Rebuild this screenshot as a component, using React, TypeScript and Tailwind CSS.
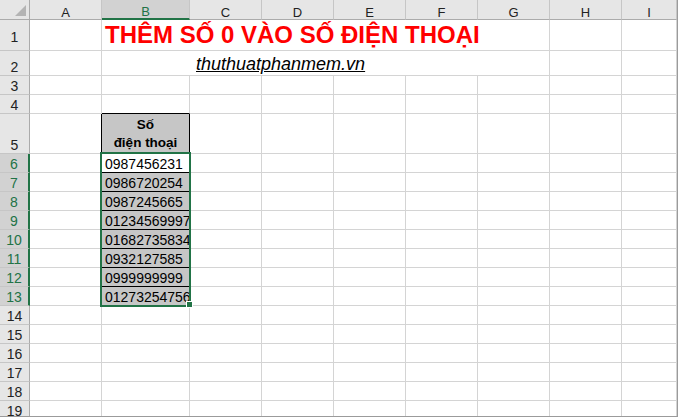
import clsx from 'clsx'

const COLS = ['A', 'B', 'C', 'D', 'E', 'F', 'G', 'H', 'I']
const PHONES = ['0987456231', '0986720254', '0987245665', '01234569997', '01682735834', '0932127585', '0999999999', '01273254756']
const ROWS = Array.from({ length: 19 }, (_, i) => i + 1)

const grid = 'border-r border-b border-[#d4d4d4]'

function RowHead({ n }: { n: number }) {
  const sel = n >= 6 && n <= 13
  return (
    <div
      className={clsx(
        'flex items-end justify-center border-b border-b-[#c6c6c6] text-[14px] leading-[16px]',
        sel ? 'border-r-2 border-r-[#217346] bg-[#d2d2d2] text-[#217346]' : 'border-r border-r-[#ababab] bg-[#e6e6e6] text-[#222]',
        n === 1 && 'pb-[5px]',
      )}
    >
      {n}
    </div>
  )
}

function Cell({ row, col }: { row: number; col: string }) {
  // tieu de o B5
  if (row === 5 && col === 'B') {
    return (
      <div className="flex flex-col items-center justify-end border-r border-b border-black bg-[#c6c6c6] pb-[1px] text-[13.5px] font-bold leading-[18px] text-black">
        <span>Số</span>
        <span>điện thoại</span>
      </div>
    )
  }
  if (row >= 6 && row <= 13 && col === 'B') {
    return (
      <div
        className={clsx(
          'flex items-end whitespace-nowrap border-r border-b border-black pl-[3px] text-[14px] leading-[15px] text-black',
          row === 6 ? 'bg-white' : 'bg-[#c6c6c6]',
        )}
      >
        {PHONES[row - 6]}
      </div>
    )
  }
  if (col === 'A' && row >= 5 && row <= 13) {
    return <div className="border-r border-b border-[#d4d4d4] border-r-black" />
  }
  if (col === 'B' && row === 4) {
    return <div className="border-r border-b border-[#d4d4d4] border-b-black" />
  }
  return <div className={grid} />
}

export default function App() {
  return (
    <div className="h-[417px] w-[678px] overflow-hidden border-r border-b border-[#9b9b9b] bg-white font-['Liberation_Sans',Arial,sans-serif]">
      <div className="relative grid grid-cols-[30px_72px_88px_72px_72px_72px_72px_72px_72px_1fr] grid-rows-[20px_31px_25px_19px_19px_40px_repeat(14,19px)]">
        {/* goc trai tren */}
        <div className="relative border-r border-b border-r-[#ababab] border-b-[#ababab] bg-[#e6e6e6]">
          <svg className="absolute bottom-[3px] right-[3px]" width="11" height="11" viewBox="0 0 11 11">
            <polygon points="11,0 11,11 0,11" fill="#b4b4b4" />
          </svg>
        </div>
        {COLS.map((c) => (
          <div
            key={c}
            className={clsx(
              'flex items-end justify-center border-r border-r-[#c6c6c6] text-[13px] leading-[13px]',
              c === 'B' ? 'border-b-2 border-b-[#217346] bg-[#d2d2d2] text-[#217346]' : 'border-b border-b-[#ababab] bg-[#e6e6e6] text-[#222]',
            )}
          >
            {c}
          </div>
        ))}

        {ROWS.map((r) => {
          if (r === 1 || r === 2) {
            return [
              <RowHead key={`h${r}`} n={r} />,
              <div key={`a${r}`} className={grid} />,
              <div key={`m${r}`} className={clsx('col-span-6 flex items-end whitespace-nowrap', grid)}>
                {r === 1 ? (
                  <span className="pb-[1px] pl-[3px] text-[24px] font-bold leading-[28px] text-[#ff0000]">THÊM SỐ 0 VÀO SỐ ĐIỆN THOẠI</span>
                ) : (
                  <span className="pl-[94px] text-[18px] italic leading-[22px] text-black underline">thuthuatphanmem.vn</span>
                )}
              </div>,
              <div key={`g${r}`} className={grid} />,
              <div key={`i${r}`} className={grid} />,
            ]
          }
          return [
            <RowHead key={`h${r}`} n={r} />,
            ...COLS.map((c) => <Cell key={`${c}${r}`} row={r} col={c} />),
          ]
        })}

        {/* vung chon B6:B13 */}
        <div className="pointer-events-none absolute left-[100px] top-[152px] h-[155px] w-[91px] border-2 border-[#217346]" />
        <div className="absolute left-[186px] top-[301px] h-[7px] w-[7px] border border-white bg-[#217346]" />
      </div>
    </div>
  )
}
